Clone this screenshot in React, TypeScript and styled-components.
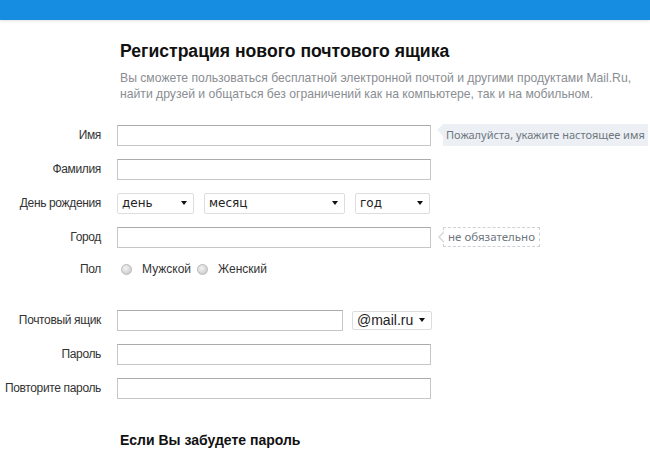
import React from 'react';
import styled, { createGlobalStyle } from 'styled-components';

/**
 * Global styles.
 */

const GlobalStyle = createGlobalStyle`
  body {
    background: #ffffff;
    color: #333333;
    font-family: 'Liberation Sans', Arial, sans-serif;
    margin: 0;
  }
`;

/**
 * `TopBar` styled component.
 */

const TopBar = styled.header`
  background: #178de2;
  box-shadow: 0 1px 3px rgba(0, 0, 0, 0.12);
  height: 20px;
`;

/**
 * `Intro` styled component.
 */

const Intro = styled.section`
  padding: 20px 0 0 120px;
`;

/**
 * `Title` styled component.
 */

const Title = styled.h1`
  color: #111111;
  font-size: 17.6px;
  font-weight: bold;
  line-height: 22px;
  margin: 0;
`;

/**
 * `Lead` styled component.
 */

const Lead = styled.p`
  color: #8a8d92;
  font-size: 12.2px;
  line-height: 16px;
  margin: 8px 0 0;
`;

/**
 * `Form` styled component.
 */

const Form = styled.form`
  display: grid;
  margin-top: 16px;
`;

/**
 * `Row` styled component.
 */

const Row = styled.div<{ height?: number; gapTop?: number }>`
  align-items: center;
  column-gap: 16px;
  display: grid;
  grid-template-columns: 101px 1fr;
  height: ${({ height }) => height ?? 34}px;
  margin-top: ${({ gapTop }) => gapTop ?? 0}px;
`;

/**
 * `Label` styled component.
 */

const Label = styled.label`
  color: #333333;
  font-size: 12px;
  letter-spacing: -0.35px;
  text-align: right;
  white-space: nowrap;
`;

/**
 * `Fields` styled component.
 */

const Fields = styled.div<{ gap?: number; inset?: number }>`
  align-items: center;
  display: flex;
  gap: ${({ gap }) => gap ?? 10}px;
  padding-left: ${({ inset }) => inset ?? 0}px;
`;

/**
 * `TextInput` styled component.
 */

const TextInput = styled.input<{ width?: number }>`
  background: #ffffff;
  border: 1px solid #c4c6c9;
  border-top-color: #a9abae;
  box-sizing: border-box;
  height: 21px;
  margin: 0;
  padding: 0 4px;
  width: ${({ width }) => width ?? 314}px;
`;

/**
 * `Select` styled component.
 */

const Select = styled.div<{ width: number; big?: boolean }>`
  align-items: center;
  background: #ffffff;
  border: 1px solid #dcdde0;
  border-radius: 2px;
  box-sizing: border-box;
  color: #222222;
  display: flex;
  font-family: ${({ big }) =>
    big ? "'Liberation Sans', Arial, sans-serif" : "'DejaVu Sans', Tahoma, sans-serif"};
  font-size: ${({ big }) => (big ? 14 : 12)}px;
  height: ${({ big }) => (big ? 19 : 21)}px;
  justify-content: space-between;
  padding: 0 6px 0 4px;
  width: ${({ width }) => width}px;
`;

/**
 * `Caret` styled component.
 */

const Caret = styled.span`
  border-left: 3px solid transparent;
  border-right: 3px solid transparent;
  border-top: 4px solid #111111;
  height: 0;
  width: 0;
`;

/**
 * `Hint` styled component.
 */

const Hint = styled.div<{ dashed?: boolean }>`
  background: ${({ dashed }) => (dashed ? '#ffffff' : '#eceff3')};
  border: ${({ dashed }) => (dashed ? '1px dashed #cfd1d4' : 'none')};
  box-sizing: border-box;
  color: #6e7780;
  font-family: 'Noto Sans', Tahoma, sans-serif;
  font-size: ${({ dashed }) => (dashed ? 11.5 : 11)}px;
  height: ${({ dashed }) => (dashed ? 20 : 22)}px;
  line-height: ${({ dashed }) => (dashed ? 18 : 22)}px;
  margin-left: 12px;
  padding: 0 ${({ dashed }) => (dashed ? 4 : 3)}px;
  position: relative;
  white-space: nowrap;

  &::before {
    border-bottom: 6px solid transparent;
    border-right: 6px solid ${({ dashed }) => (dashed ? '#d6d8db' : '#eceff3')};
    border-top: 6px solid transparent;
    content: '';
    left: -6px;
    position: absolute;
    top: ${({ dashed }) => (dashed ? 3 : 0)}px;
  }

  ${({ dashed }) =>
    dashed &&
    `
    &::after {
      border-bottom: 5px solid transparent;
      border-right: 5px solid #ffffff;
      border-top: 5px solid transparent;
      content: '';
      left: -4px;
      position: absolute;
      top: 4px;
    }
  `}
`;

/**
 * `Radio` styled component.
 */

const Radio = styled.span`
  background: radial-gradient(circle at 40% 35%, #f4f4f4 0%, #d6d6d6 60%, #c2c2c2 100%);
  border: 1px solid #b9b9b9;
  border-radius: 50%;
  box-sizing: border-box;
  display: inline-block;
  height: 11px;
  width: 11px;
`;

/**
 * `RadioLabel` styled component.
 */

const RadioLabel = styled.span`
  align-items: center;
  display: inline-flex;
  font-size: 12px;
  gap: 10px;
`;

/**
 * `SubTitle` styled component.
 */

const SubTitle = styled.h2`
  color: #111111;
  font-size: 14px;
  font-weight: bold;
  line-height: 18px;
  margin: 26px 0 0 120px;
`;

/**
 * Export `App` component.
 */

export default function App() {
  return (
    <>
      <GlobalStyle />
      <TopBar />

      <Intro>
        <Title>{'Регистрация нового почтового ящика'}</Title>
        <Lead>
          {'Вы сможете пользоваться бесплатной электронной почтой и другими продуктами Mail.Ru,'}
          <br />
          {'найти друзей и общаться без ограничений как на компьютере, так и на мобильном.'}
        </Lead>
      </Intro>

      <Form>
        <Row>
          <Label>{'Имя'}</Label>
          <Fields gap={0}>
            <TextInput />
            <Hint>{'Пожалуйста, укажите настоящее имя'}</Hint>
          </Fields>
        </Row>

        <Row>
          <Label>{'Фамилия'}</Label>
          <Fields>
            <TextInput />
          </Fields>
        </Row>

        <Row>
          <Label>{'День рождения'}</Label>
          <Fields>
            <Select width={77}>
              <span>{'день'}</span>
              <Caret />
            </Select>
            <Select width={141}>
              <span>{'месяц'}</span>
              <Caret />
            </Select>
            <Select width={75}>
              <span>{'год'}</span>
              <Caret />
            </Select>
          </Fields>
        </Row>

        <Row>
          <Label>{'Город'}</Label>
          <Fields gap={0}>
            <TextInput />
            <Hint dashed>{'не обязательно'}</Hint>
          </Fields>
        </Row>

        <Row height={30}>
          <Label>{'Пол'}</Label>
          <Fields gap={6} inset={4}>
            <RadioLabel>
              <Radio />
              {'Мужской'}
            </RadioLabel>
            <RadioLabel>
              <Radio />
              {'Женский'}
            </RadioLabel>
          </Fields>
        </Row>

        <Row gapTop={19}>
          <Label>{'Почтовый ящик'}</Label>
          <Fields gap={9}>
            <TextInput width={226} />
            <Select big width={80}>
              <span>{'@mail.ru'}</span>
              <Caret />
            </Select>
          </Fields>
        </Row>

        <Row>
          <Label>{'Пароль'}</Label>
          <Fields>
            <TextInput />
          </Fields>
        </Row>

        <Row>
          <Label>{'Повторите пароль'}</Label>
          <Fields>
            <TextInput />
          </Fields>
        </Row>
      </Form>

      <SubTitle>{'Если Вы забудете пароль'}</SubTitle>
    </>
  );
}
